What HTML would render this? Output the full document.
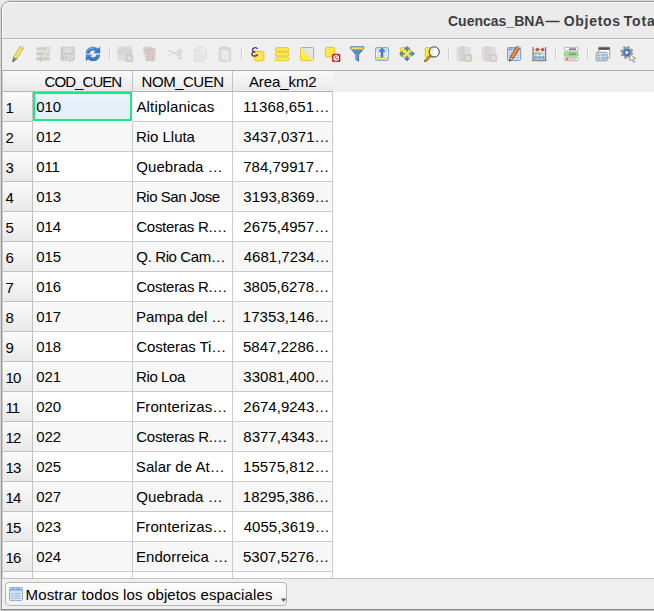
<!DOCTYPE html>
<html><head><meta charset="utf-8">
<style>
*{box-sizing:border-box;margin:0;padding:0}
html,body{width:654px;height:611px;overflow:hidden;background:radial-gradient(circle at 0 0,#ebebeb 0,#ebebeb 3px,#d6d6d6 10px);font-family:"Liberation Sans",sans-serif;font-size:15px;color:#000}
.t{display:inline-block;white-space:nowrap}
#win{position:absolute;left:1px;top:1px;width:700px;height:609px;border:1px solid #9b9b9b;border-bottom-color:#8c8c8c;border-top-left-radius:9px;background:#efefef;overflow:hidden}
#title{position:absolute;left:0;top:0;width:700px;height:37px;background:#ebebeb;border-bottom:1px solid #bababa;box-shadow:inset 1px 1px 0 #fbfbfb;border-top-left-radius:8px}
#title .t{position:absolute;top:11px;font-weight:bold;font-size:14px;color:#3d3d3d;white-space:pre}
#tb{position:absolute;left:0;top:37px;width:700px;height:31px;background:#efefef;border-top:1px solid #f4f4f4}
#tb svg{position:absolute;top:6px}
.sep{position:absolute;top:8px;width:2px;height:12px;border-left:1px solid #cfcfcf;border-right:1px solid #fbfbfb}
#frame{position:absolute;left:0;top:68px;width:700px;height:509px;border:1px solid #ababab;border-left-color:#c9c9c9;border-bottom-color:#c2c2c2;background:#fff;overflow:hidden}
#hbg{position:absolute;left:0;top:0;width:700px;height:21px;background:#efefef}
#table{position:absolute;left:0;top:0;width:330px;height:507px;overflow:hidden}
.hh{position:absolute;top:0;height:21px;background:linear-gradient(#fafafa,#e9e9e9);border-right:1px solid #c2c2c2;border-bottom:1px solid #b4b4b4;text-align:center;line-height:22px;white-space:nowrap}
.vh{position:absolute;left:0;width:30px;height:30px;background:linear-gradient(#fbfbfb,#e9e9e9);border-right:1px solid #c2c2c2;border-bottom:1px solid #c2c2c2;line-height:31px;padding-left:3px;white-space:nowrap}
.c{position:absolute;height:30px;width:100px;border-right:1px solid #cbcbcb;border-bottom:1px solid #cbcbcb;line-height:29px;padding-left:3px;white-space:nowrap;overflow:hidden;background:#fff}
.r{text-align:right;padding-right:4px}
.alt{background:#f7f7f7}
.sel{border:2px solid #17ea80;width:99px;height:29px;background:linear-gradient(#e8f3fc,#e5edf7);line-height:25px;padding-left:1px}
#btn{position:absolute;left:3px;top:580px;width:282px;height:24px;border:1px solid #b5b5b5;border-radius:4px;background:linear-gradient(#fdfdfd,#f1f1f1)}
#bico{position:absolute;left:2px;top:3px}
#btn .t{position:absolute;top:3px}
#barr{position:absolute;left:274px;top:15px}

#bot{position:absolute;left:0;top:610px;width:654px;height:1px;background:#bdbdbd}

</style></head><body>
<div id="win">
<div id="title"><span id="ttl1" class="t " style="letter-spacing:0.003px;left:446.0px;">Cuencas_BNA</span><span id="ttl2" class="t " style="left:543.6px;">—</span><span id="ttl3" class="t " style="letter-spacing:0.708px;left:561.75px;">Objetos</span><span id="ttl4" class="t " style="letter-spacing:0.923px;left:621.7px;">Tot</span><span id="ttl5" class="t " style="left:644.95px;">ales</span></div>
<div id="tb">
<svg style="left:8px" width="16" height="16" viewBox="0 0 16 16" ><g transform="translate(2.6,16.2) rotate(31.5)">
<path d="M0 0L-1.85 -4.836L1.85 -4.836Z" fill="#8a8a8a" stroke="#555" stroke-width="0.5" stroke-linejoin="round"/>
<path d="M0 0L-0.8325 -2.232L0.8325 -2.232Z" fill="#555"/>
<rect x="-1.85" y="-17.484" width="3.7" height="12.648000000000001" fill="#dccf4a" stroke="#b9ab30" stroke-width="0.6"/>
<rect x="-0.6475" y="-17.484" width="1.11" height="12.648000000000001" fill="#efe682"/>
<rect x="-1.85" y="-18.6" width="3.7" height="1.3020000000000003" fill="#fafafa" stroke="#b9ab30" stroke-width="0.4"/>
<path d="M-1.8 -6.2L1.8 -7.4M-1.8 -8.8L1.8 -10M-1.8 -11.4L1.8 -12.6M-1.8 -14L1.8 -15.2" stroke="#f3eeb4" stroke-width="0.7"/></g></svg>
<svg style="left:33px;filter:brightness(0.95)" width="16" height="16" viewBox="0 0 16 16" ><rect x="1.3" y="1.2" width="13.5" height="3.6" rx="1" fill="#dcdacf"/><rect x="1.3" y="6" width="13.5" height="3.6" rx="1" fill="#dcdacf"/><rect x="1.3" y="10.8" width="13.5" height="3.6" rx="1" fill="#dcdacf"/><g transform="translate(5.2,16) rotate(31)">
<path d="M0 0L-1.7 -4.68L1.7 -4.68Z" fill="#dcdcdc" stroke="#cfcfcf" stroke-width="0.5" stroke-linejoin="round"/>
<path d="M0 0L-0.765 -2.16L0.765 -2.16Z" fill="#cfcfcf"/>
<rect x="-1.7" y="-16.919999999999998" width="3.4" height="12.24" fill="#ece6e6" stroke="#d6cfcf" stroke-width="0.6"/>
<rect x="-0.595" y="-16.919999999999998" width="1.02" height="12.24" fill="#f4f0f0"/>
<rect x="-1.7" y="-18" width="3.4" height="1.2600000000000002" fill="#fafafa" stroke="#d6cfcf" stroke-width="0.4"/>
</g></svg>
<svg style="left:58px;filter:brightness(0.95)" width="16" height="16" viewBox="0 0 16 16" ><rect x="1" y="1" width="13.4" height="13.4" rx="1.5" fill="#d7d7d7" stroke="#cdcdcd" stroke-width="0.6"/><rect x="3.2" y="1.6" width="9" height="5.2" fill="#e8e8e8"/><rect x="4" y="9" width="7" height="5" fill="#e6e6e6"/><rect x="5" y="10" width="1.6" height="3" fill="#cfcfcf"/><g transform="translate(9.3,16) rotate(33)">
<path d="M0 0L-1.3 -2.47L1.3 -2.47Z" fill="#d8d8d8" stroke="#cccccc" stroke-width="0.5" stroke-linejoin="round"/>
<path d="M0 0L-0.5850000000000001 -1.14L0.5850000000000001 -1.14Z" fill="#cccccc"/>
<rect x="-1.3" y="-8.93" width="2.6" height="6.460000000000001" fill="#e9e1e1" stroke="#d4cccc" stroke-width="0.6"/>
<rect x="-0.45499999999999996" y="-8.93" width="0.78" height="6.460000000000001" fill="#f2eeee"/>
<rect x="-1.3" y="-9.5" width="2.6" height="0.665" fill="#fafafa" stroke="#d4cccc" stroke-width="0.4"/>
</g></svg>
<svg style="left:83px" width="16" height="16" viewBox="0 0 16 16" ><defs><linearGradient id="rg" x1="0" y1="0" x2="0" y2="1"><stop offset="0" stop-color="#4f8fd6"/><stop offset="1" stop-color="#2f6cb4"/></linearGradient></defs>
<path d="M0.8 7.4C0.8 3.4 4.2 0.7 8 0.7C10 0.7 11.6 1.4 12.8 2.6L15.2 0.6V7.2H8.4L10.4 5.2C9.8 4.7 9 4.4 8 4.4C6.2 4.4 5 5.6 4.7 7.4Z" fill="url(#rg)"/>
<path d="M15.2 8.4C15.2 12.4 11.8 15.1 8 15.1C6 15.1 4.4 14.4 3.2 13.2L0.8 15.2V8.6H7.6L5.6 10.6C6.2 11.1 7 11.4 8 11.4C9.8 11.4 11 10.2 11.3 8.4Z" fill="url(#rg)"/>
<path d="M2.2 6.5C2.8 4 5 2 8 2" stroke="#a9cbf0" stroke-width="0.8" fill="none" opacity="0.8"/></svg>
<div class="sep" style="left:107px"></div>
<svg style="left:115px;filter:brightness(0.95)" width="17" height="16" viewBox="0 0 17 16" ><rect x="1" y="1" width="13.4" height="13" rx="1" fill="#e9ebee" stroke="#dcdfe4" stroke-width="0.7"/><rect x="1.4" y="1.4" width="12.6" height="2.6" fill="#e1e4e9"/><rect x="0.4" y="4.6" width="14.8" height="2.6" rx="0.6" fill="#e4e1d6" stroke="#dad6c8" stroke-width="0.5"/><path d="M3 9.2h3M3 11.6h3M7.5 9.2h2" stroke="#dde0e5" stroke-width="0.9"/><rect x="8.8" y="8.6" width="7" height="7" rx="0.8" fill="#d9d6c9" stroke="#d0ccbd" stroke-width="0.5"/><path d="M12.3 9.6v5M9.8 12.1h5M10.5 10.3l3.6 3.6M14.1 10.3l-3.6 3.6" stroke="#f2f1ec" stroke-width="1"/></svg>
<svg style="left:140px;filter:brightness(0.95)" width="16" height="16" viewBox="0 0 16 16" ><rect x="1.6" y="0.8" width="9" height="7" rx="1" fill="#e4e1d8" stroke="#dbd7cb" stroke-width="0.5"/><path d="M2.4 3.2h11.6" stroke="#d9c6c6" stroke-width="1"/><path d="M3.6 4.6h9.4l-0.6 10h-8.2Z" fill="#e6dcdc" stroke="#d8c4c4" stroke-width="0.9" stroke-linejoin="round"/><path d="M6.2 5.6v8M8.3 5.6v8M10.4 5.6v8" stroke="#d8c4c4" stroke-width="0.9"/></svg>
<svg style="left:165px" width="16" height="16" viewBox="0 0 16 16" ><path d="M1.2 4L11.2 9.6M1.4 8.8L11.2 6" stroke="#d2d2d2" stroke-width="1.1" stroke-linecap="round"/><ellipse cx="12.8" cy="5.8" rx="1.7" ry="1.9" fill="none" stroke="#d2c6c6" stroke-width="1.1"/><ellipse cx="12.6" cy="10.8" rx="1.7" ry="2" fill="none" stroke="#d2c6c6" stroke-width="1.1"/></svg>
<svg style="left:190px" width="16" height="16" viewBox="0 0 16 16" ><path d="M6 1h5l3 3v8.6h-8Z" fill="#ededed" stroke="#d6d6d6" stroke-width="0.8" stroke-linejoin="round"/><path d="M2.6 4.2h5l3 3v8.2h-8Z" fill="#e9e9e9" stroke="#d3d3d3" stroke-width="0.8" stroke-linejoin="round"/><path d="M4 9h4.6M4 11h4.6M4 13h3" stroke="#dadada" stroke-width="0.8"/></svg>
<svg style="left:215px" width="16" height="16" viewBox="0 0 16 16" ><rect x="2.2" y="1.6" width="11.4" height="13.6" rx="1.2" fill="#dedbd6" stroke="#d3d0ca" stroke-width="0.7"/><rect x="5.4" y="0.6" width="5" height="2.4" rx="0.8" fill="#d6d3ce"/><path d="M4.6 4h5l2.4 2.4v7.6h-7.4Z" fill="#eeeeee" stroke="#dadada" stroke-width="0.6"/><path d="M6 8h4.4M6 10h4.4M6 12h3" stroke="#dcdcdc" stroke-width="0.8"/></svg>
<div class="sep" style="left:239px"></div>
<svg style="left:247px" width="16" height="16" viewBox="0 0 16 16" ><rect x="5.5" y="5.5" width="9.4" height="9.4" rx="1.4" fill="#fce94f" stroke="#e4c41c" stroke-width="1"/><path d="M8.2 2.6C7 1.2 3.4 1.4 3.4 3.8C3.4 5.4 5 5.8 6.4 5.7C4.6 5.8 2.6 6.4 2.8 8.4C3 10.6 7 10.6 8.6 8.8" fill="none" stroke="#5c3566" stroke-width="1.3" stroke-linecap="round"/></svg>
<svg style="left:272px" width="16" height="16" viewBox="0 0 16 16" ><rect x="1.5" y="1.6" width="13.2" height="3.6" rx="1.2" fill="#fce94f" stroke="#e4c41c" stroke-width="0.9"/><rect x="1.5" y="6.3" width="13.2" height="3.6" rx="1.2" fill="#fce94f" stroke="#e4c41c" stroke-width="0.9"/><rect x="1.5" y="11" width="13.2" height="3.6" rx="1.2" fill="#fce94f" stroke="#e4c41c" stroke-width="0.9"/></svg>
<svg style="left:297px" width="16" height="16" viewBox="0 0 16 16" ><path d="M1.5 1.8L14.5 14.6H2.5Q1.5 14.6 1.5 13.6Z" fill="#fce94f" stroke="#e4c41c" stroke-width="0.9" stroke-linejoin="round"/><path d="M2.6 1.5H13.6Q14.6 1.5 14.6 2.5V13.6Z" fill="#e6e6e6" stroke="#a3a3a3" stroke-width="0.9" stroke-linejoin="round"/><path d="M1.8 1.6L14.6 14.4" stroke="#fbfbfb" stroke-width="1.1"/></svg>
<svg style="left:322px" width="17" height="16" viewBox="0 0 17 16" ><rect x="1.4" y="1.4" width="9.4" height="9.4" rx="1.4" fill="#fce94f" stroke="#e4c41c" stroke-width="1"/><rect x="8.4" y="8.2" width="7.6" height="7.6" rx="1.2" fill="#dc1010" stroke="#c00000" stroke-width="0.6"/><circle cx="12.2" cy="12" r="2.3" fill="none" stroke="#fff" stroke-width="1.3"/><path d="M10.4 13.9L14 10.1" stroke="#fff" stroke-width="1.3"/></svg>
<svg style="left:347px" width="16" height="16" viewBox="0 0 16 16" ><path d="M1.6 0.8H14.8V2.6L9.6 8.6V15.4L6.8 13.6V8.6L1.6 2.6Z" fill="#5b8bc7" stroke="#3768a8" stroke-width="0.8" stroke-linejoin="round"/><rect x="2.2" y="1.2" width="12" height="2" fill="#f4e04a" stroke="#d9c02a" stroke-width="0.4"/><path d="M7.4 8.4V13.6" stroke="#8fb4e2" stroke-width="0.8"/></svg>
<svg style="left:372px" width="16" height="16" viewBox="0 0 16 16" ><rect x="1.5" y="1.5" width="13" height="13" rx="1" fill="#eef4fb" stroke="#86aee0" stroke-width="1"/><rect x="2" y="2" width="12" height="2.6" fill="#b4cfee"/><path d="M3 3.3h3.4M9.6 3.3h3.4" stroke="#e6f0fa" stroke-width="0.8"/><path d="M3 6.6h3.4M9.6 6.6h3.4M3 9h3.4M9.6 9h3.4" stroke="#a9c6e8" stroke-width="0.8"/><rect x="2.1" y="10.8" width="11.8" height="3.1" fill="#f0d030"/><path d="M3 12.4h2.6M7.4 12.4h5" stroke="#fbf0a0" stroke-width="0.8"/><path d="M8 2L11.1 5.4H9V11H7V5.4H4.9Z" fill="#4a82c4" stroke="#2f5f9c" stroke-width="0.5" stroke-linejoin="round"/></svg>
<svg style="left:397px" width="16" height="16" viewBox="0 0 16 16" ><rect x="1.6" y="1.6" width="9.4" height="9.2" rx="1.2" fill="#fce94f" stroke="#e4c41c" stroke-width="1"/><g fill="#4c82c4" stroke="#3568a8" stroke-width="0.4"><path d="M8 0.2L10.8 3.4H5.2Z"/><path d="M8 15.2L10.8 12H5.2Z"/><path d="M0.4 7.7L3.6 4.9V10.5Z"/><path d="M15.6 7.7L12.4 4.9V10.5Z"/></g><path d="M8 3.4V12M3.6 7.7H12.4" stroke="#4c82c4" stroke-width="1.6"/><rect x="6" y="5.7" width="4" height="4" fill="#fce94f"/></svg>
<svg style="left:422px" width="16" height="16" viewBox="0 0 16 16" ><rect x="1.2" y="1.6" width="8.6" height="9.4" rx="1" fill="#fce94f" stroke="#e4c41c" stroke-width="1"/><path d="M5.6 10.6L1.4 14.8" stroke="#6b4a00" stroke-width="2.6" stroke-linecap="round"/><path d="M5.4 10.8L1.6 14.6" stroke="#f0b000" stroke-width="1.4" stroke-linecap="round"/><defs><linearGradient id="zg" x1="0" y1="0" x2="1" y2="0"><stop offset="0" stop-color="#e6e2c6"/><stop offset="0.45" stop-color="#f4f2e4"/><stop offset="0.5" stop-color="#ffffff"/><stop offset="1" stop-color="#ffffff"/></linearGradient></defs><circle cx="10.2" cy="5.9" r="5.1" fill="url(#zg)" stroke="#2b2b2b" stroke-width="0.9"/></svg>
<div class="sep" style="left:446px"></div>
<svg style="left:454px;filter:brightness(0.95)" width="17" height="16" viewBox="0 0 17 16" ><rect x="1.2" y="1.4" width="13" height="12.6" rx="0.8" fill="#e8e9ec" stroke="#dcdee3" stroke-width="0.7"/><path d="M2 4.4h11.6M2 7h11.6M2 9.6h11.6" stroke="#dfe1e6" stroke-width="0.7"/><rect x="4.6" y="0.6" width="3.4" height="14.4" rx="0.6" fill="#e2dfd4" stroke="#d8d4c6" stroke-width="0.5"/><rect x="8.8" y="8.6" width="7" height="7" rx="0.8" fill="#d9d6c9" stroke="#d0ccbd" stroke-width="0.5"/><path d="M12.3 9.6v5M9.8 12.1h5M10.5 10.3l3.6 3.6M14.1 10.3l-3.6 3.6" stroke="#f2f1ec" stroke-width="1"/></svg>
<svg style="left:479px;filter:brightness(0.95)" width="17" height="16" viewBox="0 0 17 16" ><rect x="1.2" y="1.4" width="13" height="12.6" rx="0.8" fill="#e9e9ec" stroke="#dddde3" stroke-width="0.7"/><path d="M2 4.4h11.6M2 7h11.6M2 9.6h11.6" stroke="#e0e0e6" stroke-width="0.7"/><rect x="4.6" y="0.6" width="3.4" height="14.4" rx="0.6" fill="#e6dcdc" stroke="#dccccc" stroke-width="0.5"/><rect x="8.8" y="8.6" width="7" height="7" rx="0.8" fill="#e3d6d6" stroke="#d8c6c6" stroke-width="0.5"/><path d="M10.5 10.3l3.6 3.6M14.1 10.3l-3.6 3.6" stroke="#f6f1f1" stroke-width="1.3"/></svg>
<svg style="left:504px" width="16" height="16" viewBox="0 0 16 16" ><rect x="1.5" y="1.6" width="13.2" height="12.8" rx="1" fill="#d3e2f3" stroke="#6f9bd0" stroke-width="1"/><rect x="2" y="2.1" width="12.2" height="2.6" fill="#9dbde4"/><path d="M3 3.4h3M7.4 3.4h5.4" stroke="#6690c8" stroke-width="0.8"/><path d="M3 6.8h3M7.4 6.8h5.4M3 9.2h3M7.4 9.2h5.4M3 11.6h3M7.4 11.6h5.4" stroke="#8fb2dc" stroke-width="0.8"/><g transform="translate(3.4,15.4) rotate(32)">
<path d="M0 0L-1.7 -4.5760000000000005L1.7 -4.5760000000000005Z" fill="#d8d8d8" stroke="#333" stroke-width="0.5" stroke-linejoin="round"/>
<path d="M0 0L-0.765 -2.112L0.765 -2.112Z" fill="#333"/>
<rect x="-1.7" y="-16.544" width="3.4" height="11.968000000000002" fill="#e8731c" stroke="#8a3d08" stroke-width="0.6"/>
<rect x="-0.595" y="-16.544" width="1.02" height="11.968000000000002" fill="#f6a45c"/>
<rect x="-1.7" y="-17.6" width="3.4" height="1.2320000000000002" fill="#fafafa" stroke="#8a3d08" stroke-width="0.4"/>
</g></svg>
<svg style="left:529px" width="17" height="16" viewBox="0 0 17 16" ><path d="M2 1V14M14.6 1V14" stroke="#7a7a7a" stroke-width="1.2"/><path d="M2 3.6H14.6M2 7.6H14.6M2 11.4H14.6" stroke="#9a9a9a" stroke-width="0.8"/><rect x="0.8" y="13.4" width="15" height="1.8" rx="0.4" fill="#8a8a8a"/><g stroke-width="0.5"><ellipse cx="6.4" cy="3.6" rx="1.3" ry="1.6" fill="#e85050" stroke="#b82020"/><ellipse cx="11.7" cy="3.6" rx="1.3" ry="1.6" fill="#e85050" stroke="#b82020"/><ellipse cx="4.6" cy="7.6" rx="1.3" ry="1.5" fill="#9adc96" stroke="#62b05e"/><ellipse cx="8.4" cy="7.6" rx="1.3" ry="1.5" fill="#9adc96" stroke="#62b05e"/><ellipse cx="4.6" cy="11.4" rx="1.3" ry="1.5" fill="#8ab6e6" stroke="#5084c0"/><ellipse cx="8.4" cy="11.4" rx="1.3" ry="1.5" fill="#8ab6e6" stroke="#5084c0"/><ellipse cx="12" cy="11.4" rx="1.3" ry="1.5" fill="#8ab6e6" stroke="#5084c0"/></g></svg>
<div class="sep" style="left:553px"></div>
<svg style="left:561px" width="17" height="16" viewBox="0 0 17 16" ><rect x="1.4" y="1.4" width="13.6" height="3.4" rx="0.8" fill="#fdfdfd" stroke="#a8a8a8" stroke-width="0.8"/><path d="M6 3.1h7" stroke="#555" stroke-width="1.2"/><rect x="1.4" y="6.2" width="13.6" height="3.8" rx="0.8" fill="#a6e89c" stroke="#6cc060" stroke-width="0.8"/><path d="M6 8.1h7" stroke="#8a9a88" stroke-width="1.6"/><rect x="1.4" y="11.4" width="13.6" height="3.4" rx="0.8" fill="#fdfdfd" stroke="#a8a8a8" stroke-width="0.8"/><path d="M4.4 13.1h8.6" stroke="#f08080" stroke-width="0.9"/><rect x="3" y="12.5" width="1.8" height="1.3" fill="#c00000"/></svg>
<div class="sep" style="left:585px"></div>
<svg style="left:593px" width="16" height="16" viewBox="0 0 16 16" ><rect x="3.6" y="1.2" width="11.2" height="11" rx="0.8" fill="#f2f2f2" stroke="#8c8c8c" stroke-width="0.8"/><rect x="3.8" y="1.4" width="10.8" height="2.4" fill="#4d4d4d"/><rect x="1.2" y="6.6" width="11" height="8.2" rx="0.8" fill="#e4ecf6" stroke="#808890" stroke-width="0.8"/><rect x="2.2" y="8" width="2.8" height="2.4" fill="#9cbde2"/><rect x="5.6" y="8" width="5.6" height="2.4" fill="#9cbde2"/><rect x="2.2" y="11" width="2.8" height="2.8" fill="#9cbde2"/><rect x="5.6" y="11" width="5.6" height="2.8" fill="#9cbde2"/></svg>
<svg style="left:618px" width="17" height="17" viewBox="0 0 17 17" ><circle cx="6.8" cy="6.4" r="5.4" fill="none" stroke="#9c9c9c" stroke-width="2.2" stroke-dasharray="2.2 2.04"/><circle cx="6.8" cy="6.4" r="4.6" fill="#d8d8d8" stroke="#858585" stroke-width="1"/><circle cx="6.8" cy="6.4" r="3.5" fill="#3f7cc8" stroke="#2c5f9e" stroke-width="0.5"/><path d="M5.6 4.4L9.2 6.4L5.6 8.4Z" fill="#fff"/><path d="M9.6 8.6L10 15L11.8 13.2L13.6 16.4L14.8 15.6L13.2 12.6L15.6 12.2Z" fill="#fafafa" stroke="#7a7a7a" stroke-width="0.7" stroke-linejoin="round"/></svg>
</div>
<div id="frame"><div id="hbg"></div><div id="table">
<div class="hh" style="left:0;width:130px;border-right:none"></div>
<div class="hh" style="left:30px;width:100px"><span id="h0" class="t " style="letter-spacing:-0.926px;position:relative;left:0.4px;">COD_CUEN</span></div>
<div class="hh" style="left:130px;width:100px"><span id="h1" class="t " style="letter-spacing:-0.482px;position:relative;left:0.1px;">NOM_CUEN</span></div>
<div class="hh" style="left:230px;width:100px;border-right:none"><span id="h2" class="t " style="letter-spacing:-0.077px;position:relative;left:-0.25px;">Area_km2</span></div>
<div class="vh" style="top:21px"><span id="v0" class="t " style="position:relative;left:-0.4px;">1</span></div>
<div class="c sel" style="left:30px;top:21px"><span id="a0" class="t " style="letter-spacing:-0.2px;position:relative;left:0.35px;">010</span></div>
<div class="c" style="left:130px;top:21px"><span id="b0" class="t " style="letter-spacing:0.172px;position:relative;left:0.45px;">Altiplanicas</span></div>
<div class="c r" style="left:230px;top:21px"><span id="c0" class="t " style="letter-spacing:0.185px;position:relative;left:1.6px;">11368,651…</span></div>
<div class="vh" style="top:51px"><span id="v1" class="t " style="position:relative;left:-0.4px;">2</span></div>
<div class="c alt" style="left:30px;top:51px"><span id="a1" class="t " style="letter-spacing:-0.2px;position:relative;left:0.35px;">012</span></div>
<div class="c alt" style="left:130px;top:51px"><span id="b1" class="t " style="letter-spacing:-0.034px;">Rio Lluta</span></div>
<div class="c r alt" style="left:230px;top:51px"><span id="c1" class="t " style="letter-spacing:0.04px;position:relative;left:1.65px;">3437,0371…</span></div>
<div class="vh" style="top:81px"><span id="v2" class="t " style="position:relative;left:-0.4px;">3</span></div>
<div class="c" style="left:30px;top:81px"><span id="a2" class="t " style="letter-spacing:-0.2px;position:relative;left:0.35px;">011</span></div>
<div class="c" style="left:130px;top:81px"><span id="b2" class="t " style="letter-spacing:0.05px;position:relative;left:0.35px;">Quebrada …</span></div>
<div class="c r" style="left:230px;top:81px"><span id="c2" class="t " style="position:relative;left:1.2px;">784,79917…</span></div>
<div class="vh" style="top:111px"><span id="v3" class="t " style="position:relative;left:-0.4px;">4</span></div>
<div class="c alt" style="left:30px;top:111px"><span id="a3" class="t " style="letter-spacing:-0.2px;position:relative;left:0.35px;">013</span></div>
<div class="c alt" style="left:130px;top:111px"><span id="b3" class="t " style="letter-spacing:-0.47px;">Rio San Jose</span></div>
<div class="c r alt" style="left:230px;top:111px"><span id="c3" class="t " style="letter-spacing:0.04px;position:relative;left:1.65px;">3193,8369…</span></div>
<div class="vh" style="top:141px"><span id="v4" class="t " style="position:relative;left:-0.4px;">5</span></div>
<div class="c" style="left:30px;top:141px"><span id="a4" class="t " style="letter-spacing:-0.2px;position:relative;left:0.35px;">014</span></div>
<div class="c" style="left:130px;top:141px"><span id="b4" class="t " style="letter-spacing:-0.284px;position:relative;left:0.3px;">Costeras R.…</span></div>
<div class="c r" style="left:230px;top:141px"><span id="c4" class="t " style="position:relative;left:1.25px;">2675,4957…</span></div>
<div class="vh" style="top:171px"><span id="v5" class="t " style="position:relative;left:-0.4px;">6</span></div>
<div class="c alt" style="left:30px;top:171px"><span id="a5" class="t " style="letter-spacing:-0.2px;position:relative;left:0.35px;">015</span></div>
<div class="c alt" style="left:130px;top:171px"><span id="b5" class="t " style="letter-spacing:-0.382px;position:relative;left:0.35px;">Q. Rio Cam…</span></div>
<div class="c r alt" style="left:230px;top:171px"><span id="c5" class="t " style="position:relative;left:1.7px;">4681,7234…</span></div>
<div class="vh" style="top:201px"><span id="v6" class="t " style="position:relative;left:-0.4px;">7</span></div>
<div class="c" style="left:30px;top:201px"><span id="a6" class="t " style="letter-spacing:-0.2px;position:relative;left:0.35px;">016</span></div>
<div class="c" style="left:130px;top:201px"><span id="b6" class="t " style="letter-spacing:-0.271px;position:relative;left:0.3px;">Costeras R.…</span></div>
<div class="c r" style="left:230px;top:201px"><span id="c6" class="t " style="position:relative;left:1.15px;">3805,6278…</span></div>
<div class="vh" style="top:231px"><span id="v7" class="t " style="position:relative;left:-0.4px;">8</span></div>
<div class="c alt" style="left:30px;top:231px"><span id="a7" class="t " style="letter-spacing:-0.2px;position:relative;left:0.35px;">017</span></div>
<div class="c alt" style="left:130px;top:231px"><span id="b7" class="t " style="letter-spacing:-0.063px;">Pampa del …</span></div>
<div class="c r alt" style="left:230px;top:231px"><span id="c7" class="t " style="letter-spacing:0.07px;position:relative;left:1.4px;">17353,146…</span></div>
<div class="vh" style="top:261px"><span id="v8" class="t " style="position:relative;left:-0.4px;">9</span></div>
<div class="c" style="left:30px;top:261px"><span id="a8" class="t " style="letter-spacing:-0.2px;position:relative;left:0.35px;">018</span></div>
<div class="c" style="left:130px;top:261px"><span id="b8" class="t " style="letter-spacing:-0.078px;position:relative;left:0.3px;">Costeras Ti…</span></div>
<div class="c r" style="left:230px;top:261px"><span id="c8" class="t " style="letter-spacing:0.045px;position:relative;left:1.25px;">5847,2286…</span></div>
<div class="vh" style="top:291px"><span id="v9" class="t " style="letter-spacing:-1.0px;position:relative;left:-0.4px;">10</span></div>
<div class="c alt" style="left:30px;top:291px"><span id="a9" class="t " style="letter-spacing:-0.2px;position:relative;left:0.35px;">021</span></div>
<div class="c alt" style="left:130px;top:291px"><span id="b9" class="t " style="letter-spacing:-0.392px;">Rio Loa</span></div>
<div class="c r alt" style="left:230px;top:291px"><span id="c9" class="t " style="letter-spacing:0.04px;position:relative;left:1.65px;">33081,400…</span></div>
<div class="vh" style="top:321px"><span id="v10" class="t " style="letter-spacing:-1.0px;position:relative;left:-0.4px;">11</span></div>
<div class="c" style="left:30px;top:321px"><span id="a10" class="t " style="letter-spacing:-0.2px;position:relative;left:0.35px;">020</span></div>
<div class="c" style="left:130px;top:321px"><span id="b10" class="t " style="letter-spacing:0.119px;">Fronterizas…</span></div>
<div class="c r" style="left:230px;top:321px"><span id="c10" class="t " style="position:relative;left:1.25px;">2674,9243…</span></div>
<div class="vh" style="top:351px"><span id="v11" class="t " style="letter-spacing:-1.0px;position:relative;left:-0.4px;">12</span></div>
<div class="c alt" style="left:30px;top:351px"><span id="a11" class="t " style="letter-spacing:-0.2px;position:relative;left:0.35px;">022</span></div>
<div class="c alt" style="left:130px;top:351px"><span id="b11" class="t " style="letter-spacing:-0.257px;position:relative;left:0.25px;">Costeras R.…</span></div>
<div class="c r alt" style="left:230px;top:351px"><span id="c11" class="t " style="position:relative;left:1.25px;">8377,4343…</span></div>
<div class="vh" style="top:381px"><span id="v12" class="t " style="letter-spacing:-1.0px;position:relative;left:-0.4px;">13</span></div>
<div class="c" style="left:30px;top:381px"><span id="a12" class="t " style="letter-spacing:-0.2px;position:relative;left:0.35px;">025</span></div>
<div class="c" style="left:130px;top:381px"><span id="b12" class="t " style="letter-spacing:0.037px;position:relative;left:-0.15px;">Salar de At…</span></div>
<div class="c r" style="left:230px;top:381px"><span id="c12" class="t " style="letter-spacing:0.065px;position:relative;left:1.6px;">15575,812…</span></div>
<div class="vh" style="top:411px"><span id="v13" class="t " style="letter-spacing:-1.0px;position:relative;left:-0.4px;">14</span></div>
<div class="c alt" style="left:30px;top:411px"><span id="a13" class="t " style="letter-spacing:-0.2px;position:relative;left:0.35px;">027</span></div>
<div class="c alt" style="left:130px;top:411px"><span id="b13" class="t " style="letter-spacing:0.05px;position:relative;left:0.35px;">Quebrada …</span></div>
<div class="c r alt" style="left:230px;top:411px"><span id="c13" class="t " style="letter-spacing:0.07px;position:relative;left:1.4px;">18295,386…</span></div>
<div class="vh" style="top:441px"><span id="v14" class="t " style="letter-spacing:-1.0px;position:relative;left:-0.4px;">15</span></div>
<div class="c" style="left:30px;top:441px"><span id="a14" class="t " style="letter-spacing:-0.2px;position:relative;left:0.35px;">023</span></div>
<div class="c" style="left:130px;top:441px"><span id="b14" class="t " style="letter-spacing:0.119px;">Fronterizas…</span></div>
<div class="c r" style="left:230px;top:441px"><span id="c14" class="t " style="position:relative;left:1.7px;">4055,3619…</span></div>
<div class="vh" style="top:471px"><span id="v15" class="t " style="letter-spacing:-1.0px;position:relative;left:-0.4px;">16</span></div>
<div class="c alt" style="left:30px;top:471px"><span id="a15" class="t " style="letter-spacing:-0.2px;position:relative;left:0.35px;">024</span></div>
<div class="c alt" style="left:130px;top:471px"><span id="b15" class="t " style="letter-spacing:0.041px;">Endorreica …</span></div>
<div class="c r alt" style="left:230px;top:471px"><span id="c15" class="t " style="letter-spacing:0.045px;position:relative;left:1.25px;">5307,5276…</span></div>
<div class="vh" style="top:501px"></div>
<div class="c" style="left:30px;top:501px"></div>
<div class="c" style="left:130px;top:501px"></div>
<div class="c" style="left:230px;top:501px"></div>
</div></div>
<div id="btn"><svg id="bico" width="16" height="16" viewBox="0 0 16 16"><rect x="1.5" y="1.5" width="13" height="13" rx="1" fill="#dbe7f5" stroke="#8fb0d8"/><rect x="2" y="2" width="12" height="3.2" fill="#a9c4e6"/><path d="M3 3.6h3M7.5 3.6h5" stroke="#6f98cd" stroke-width="1"/><path d="M3 7.5h2.5M7 7.5h5.5M3 9.8h2.5M7 9.8h5.5M3 12h2.5M7 12h5.5" stroke="#8fb0d8" stroke-width="1"/><path d="M6.2 5.5v9" stroke="#c5d7ee" stroke-width="1"/></svg><span id="btxt" class="t " style="letter-spacing:0.122px;left:19.55px;">Mostrar todos los objetos espaciales</span><svg id="barr" width="8" height="5" viewBox="0 0 8 5"><path d="M0.8 0.6L3.6 3.8L6.4 0.6Z" fill="#5a5a5a"/></svg></div>
</div>
<div id="bot"></div>
</body></html>
